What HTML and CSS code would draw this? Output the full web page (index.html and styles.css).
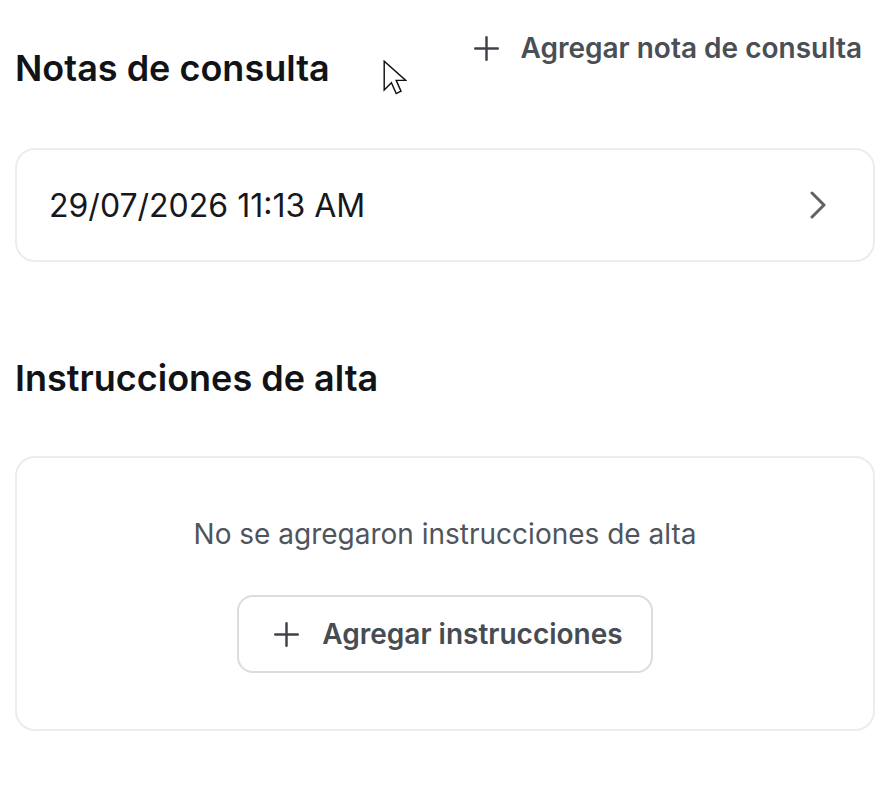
FILE: index.html
```html
<!DOCTYPE html>
<html lang="es">
<head>
<meta charset="utf-8">
<title>Notas de consulta</title>
<link rel="stylesheet" href="styles.css">
</head>
<body>
<main class="page">
  <section class="section">
    <header class="section-head">
      <h2 class="title">Notas de consulta</h2>
      <button class="link-btn" type="button">
        <svg class="plus" viewBox="0 0 24 24" aria-hidden="true"><path d="M12 2v20M2 12h20"/></svg>
        <span>Agregar nota de consulta</span>
      </button>
    </header>
    <div class="card note-card">
      <span class="note-date">29/07/2026 11:13 AM</span>
      <svg class="chev" viewBox="0 0 16 28" aria-hidden="true"><path d="M2 2l12 12L2 26"/></svg>
    </div>
  </section>

  <section class="section second">
    <header class="section-head">
      <h2 class="title">Instrucciones de alta</h2>
    </header>
    <div class="card empty-card">
      <p class="empty-text">No se agregaron instrucciones de alta</p>
      <button class="outline-btn" type="button">
        <svg class="plus" viewBox="0 0 24 24" aria-hidden="true"><path d="M12 2v20M2 12h20"/></svg>
        <span>Agregar instrucciones</span>
      </button>
    </div>
  </section>

  <svg class="cursor" viewBox="0 0 20 30" aria-hidden="true"><path d="M1 1v24l6-6 4 9 4-2-4-9h8z"/></svg>
</main>
</body>
</html>
```
FILE: styles.css
```css
* { box-sizing: border-box; }
html, body { margin: 0; padding: 0; background: #ffffff; }
body { font-family: Inter, "Noto Sans", sans-serif; color: #16171a; }

.page {
  position: relative;
  padding: 0 5px 0 15px;
}

.section-head {
  display: flex;
  justify-content: space-between;
  align-items: flex-start;
}

.title {
  margin: 0;
  font-size: 36px;
  font-weight: 600;
  line-height: 40px;
  color: #121316;
  padding-top: 48px;
}

.link-btn {
  display: flex;
  align-items: center;
  gap: 20px;
  border: none;
  background: none;
  padding: 0;
  margin: 30px 13px 0 0;
  font-family: inherit;
  font-size: 28px;
  font-weight: 600;
  color: #4a4e55;
  line-height: 36px;
}

.plus {
  width: 27px;
  height: 27px;
  fill: none;
  stroke: #3f4349;
  stroke-width: 2.2;
  stroke-linecap: round;
}

.card {
  border: 2px solid #ececee;
  border-radius: 20px;
  background: #fff;
}

.note-card {
  margin-top: 60px;
  height: 114px;
  display: flex;
  align-items: center;
  justify-content: space-between;
  padding: 0 47px 0 32px;
}

.note-date {
  font-size: 32px;
  color: #17181b;
}

.chev {
  width: 16px;
  height: 28px;
  fill: none;
  stroke: #5f6368;
  stroke-width: 3;
  stroke-linecap: round;
  stroke-linejoin: round;
}

.second .title { padding-top: 96px; }

.empty-card {
  margin-top: 58px;
  height: 275px;
  display: flex;
  flex-direction: column;
  align-items: center;
  padding-top: 56px;
}

.empty-text {
  margin: 0;
  font-size: 28px;
  line-height: 40px;
  color: #50555c;
}

.outline-btn {
  margin-top: 41px;
  display: flex;
  align-items: center;
  gap: 22px;
  height: 78px;
  padding: 0 28px 0 34px;
  border: 2px solid #dcdce0;
  border-radius: 16px;
  background: #fff;
  font-family: inherit;
  font-size: 28px;
  font-weight: 600;
  color: #474b52;
}

.cursor {
  position: absolute;
  left: 383px;
  top: 60px;
  width: 24px;
  height: 36px;
  fill: #fff;
  stroke: #111;
  stroke-width: 1.2;
  stroke-linejoin: miter;
}
```
